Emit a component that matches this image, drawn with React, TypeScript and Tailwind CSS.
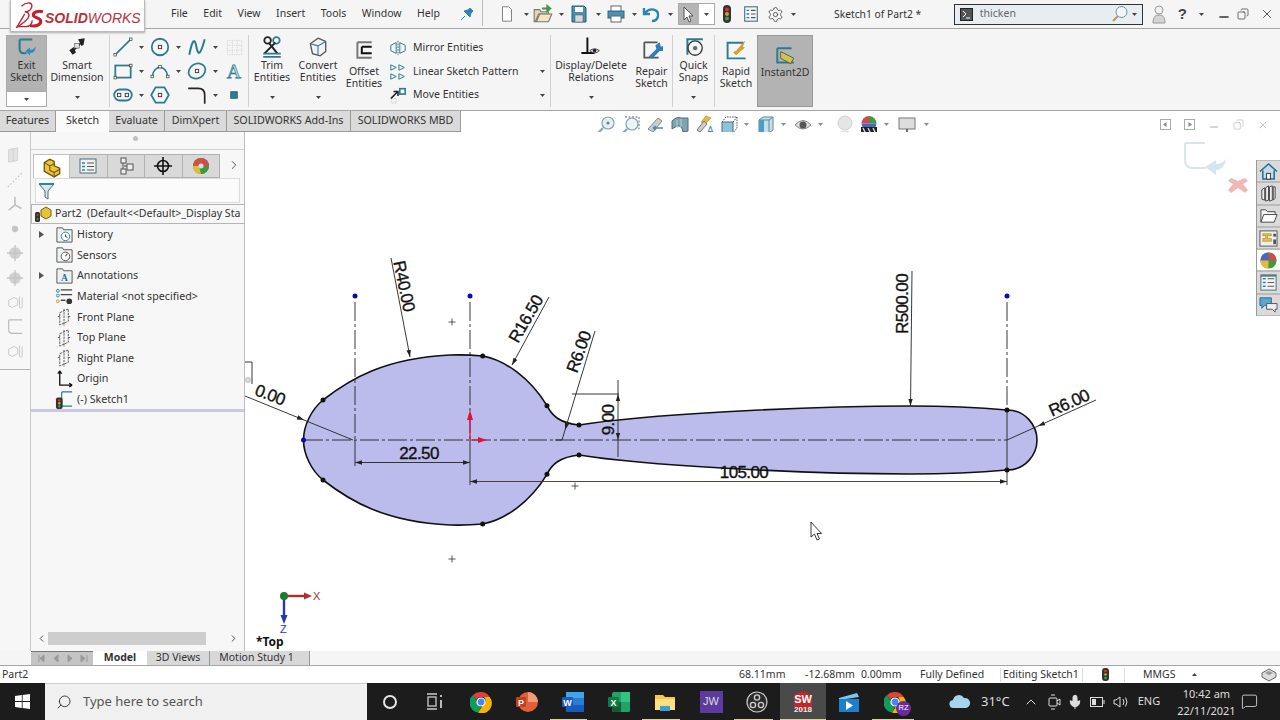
import React from "react";
import { Search, Settings, Mic, ChevronUp, MessageSquare, X, Minus, Copy, ChevronRight, ChevronLeft } from "lucide-react";

const teal = "#2b7c8e";

function Chev({ className = "" }: { className?: string }) {
  return (
    <svg width="5" height="3" viewBox="0 0 5 3" className={`shrink-0 ${className}`}>
      <path d="M0 0h5L2.500 3z" fill="#444" />
    </svg>
  );
}

function Ico({ s = 20, children, className = "" }: { s?: number; children: React.ReactNode; className?: string }) {
  return (
    <svg width={s} height={s} viewBox="0 0 20 20" fill="none" className={`shrink-0 ${className}`}>
      {children}
    </svg>
  );
}

const Sq = ({ x, y }: { x: number; y: number }) => <rect x={x - 1.2} y={y - 1.2} width="2.4" height="2.4" fill="#fff" stroke="#333" strokeWidth=".6" />;

const ToolIcons: Record<string, React.ReactNode> = {
  line: <><path d="M3 17L17 3" stroke={teal} strokeWidth="1.5" /><Sq x={3} y={17} /><Sq x={17} y={3} /></>,
  circle: <><circle cx="10" cy="10" r="7.5" stroke={teal} strokeWidth="1.6" /><rect x="8.5" y="8.5" width="3" height="3" stroke="#333" strokeWidth=".8" /></>,
  spline: <path d="M3 17C6 2 8 2 9.5 10S13 18 17 3" stroke={teal} strokeWidth="1.8" />,
  grid: <path d="M4 4h13v13H4zM4 8.5h13M4 13h13M8.5 4v13M13 4v13" stroke="#ccc" strokeWidth=".7" strokeDasharray="1 1" />,
  rect: <><rect x="3" y="5" width="14" height="11" stroke={teal} strokeWidth="1.6" /><Sq x={3} y={16} /><Sq x={17} y={5} /></>,
  arc: <><path d="M3 15C4 4 16 4 17 15" stroke={teal} strokeWidth="1.5" /><Sq x={3} y={15} /><Sq x={17} y={15} /><Sq x={10} y={6} /></>,
  ellipse: <><ellipse cx="10" cy="10" rx="8" ry="6.5" transform="rotate(-30 10 10)" stroke={teal} strokeWidth="1.6" /><rect x="8.5" y="8.5" width="3" height="3" stroke="#333" strokeWidth=".8" /></>,
  text: <text x="10" y="16.5" textAnchor="middle" fontSize="18" fontFamily="Liberation Serif, serif" fill="#e4eef0" stroke={teal} strokeWidth=".7">A</text>,
  slot: <><rect x="2" y="5" width="16" height="10" rx="5" stroke={teal} strokeWidth="1.6" /><rect x="5" y="8.5" width="3" height="3" stroke="#333" strokeWidth=".8" /><rect x="12" y="8.5" width="3" height="3" stroke="#333" strokeWidth=".8" /></>,
  polygon: <><path d="M6 3h8l4 7-4 7H6l-4-7z" stroke={teal} strokeWidth="1.6" /><rect x="8.5" y="8.5" width="3" height="3" stroke="#333" strokeWidth=".8" /></>,
  fillet: <path d="M2 4h9q6 0 6 6v8" stroke="#222" strokeWidth="1.5" />,
  point: <rect x="7" y="7" width="6" height="6" fill={teal} stroke="#1d5d6b" strokeWidth=".7" />,
  mirror: <><path d="M10 2v16" stroke="#555" strokeDasharray="2 1" /><path d="M8 4L2 7v6l6 3zM12 4l6 3v6l-6 3z" stroke={teal} strokeWidth="1.1" /></>,
  linear: <path d="M2 2l6 3-6 3zM11 2l6 3-6 3zM2 12l6 3-6 3zM11 12l6 3-6 3z" stroke={teal} strokeWidth="1.1" />,
  move: <><path d="M2 14L9 7M5 6h5v5" stroke="#222" strokeWidth="1.7" /><rect x="12" y="3" width="6" height="6" fill="#fff" stroke={teal} strokeWidth="1.8" /><rect x="3" y="14" width="5" height="5" stroke="#bbb" strokeDasharray="1 1" /></>,
};

function Tool({ name, chev = true }: { name: string; chev?: boolean }) {
  return (
    <div className="flex items-center gap-[5px] h-[24px]">
      <Ico s={22}>{ToolIcons[name]}</Ico>
      {chev && <Chev />}
    </div>
  );
}

// one text node, so the two lines can sit 12px apart like the real ribbon
function Label({ lines }: { lines: string[] }) {
  return (
    <div className="text-center text-[10.5px] leading-[12px] text-[#333] whitespace-pre">{lines.join("\n")}</div>
  );
}

function Sep() {
  return <div className="w-px h-full bg-[#d0d0d0] shrink-0" />;
}

function BigBtn({ w, lines, icon, top, chev = false }: { w: string; lines: string[]; icon: React.ReactNode; top: string; chev?: boolean }) {
  return (
    <div className={`${w} h-full flex flex-col items-center shrink-0`}>
      <div className={`${top} flex items-center justify-center`}>{icon}</div>
      <Label lines={lines} />
      {chev && <Chev className="mt-auto mb-[8px]" />}
    </div>
  );
}

function TitleBar() {
  return (
    <div className="h-[29px] bg-[#f5f5f5] border-b border-[#a6a6a6] flex items-start shrink-0 relative z-20">
      <div className="ml-[10px] w-[135px] h-[32px] bg-white border border-[#bbb] border-t-0 shadow-[0_1px_2px_#aaa] flex items-center pl-[3px] shrink-0">
        <svg width="30" height="30" viewBox="0 0 28 28" fill="none" className="shrink-0">
          <path d="M7 5c5-5 12-4 9 2-1 2-4 3-6 3 4 0 5 3 3 6-3 4-8 7-11 9" stroke="#c3202e" strokeWidth="1.300" />
          <path d="M10 12L3 24h8c4 0 6-3 6-6" stroke="#c3202e" strokeWidth="1.200" />
          <path d="M27 10c-4-1-9 0-9 3s7 2 7 6-6 5-10 4" stroke="#c3202e" strokeWidth="2.800" />
        </svg>
        <span className="font-['Liberation_Sans'] italic text-[14px] text-[#b8323c] ml-[1px] mt-[5px]">
          <b>SOLID</b>WORKS
        </span>
      </div>
      <div className="flex gap-[15.5px] ml-[26px] w-[265px] h-[28px] items-center text-[10.5px] text-[#333] shrink-0">
        {["File", "Edit", "View", "Insert", "Tools", "Window", "Help"].map((m) => (
          <span key={m}>{m}</span>
        ))}
      </div>
      <div className="ml-[24px] h-[28px] flex items-center">
        <svg width="14" height="14" viewBox="0 0 14 14"><path d="M1 13l4-4M4 4l6 6 1-4 2-2-3-3-2 2z" fill="#2a86b0" stroke="#2a86b0" /></svg>
      </div>
      <div className="w-px h-[26px] bg-[#bbb] ml-[8px]" />
      <div className="h-[28px] flex items-center ml-[15px]">
        <Ico s={18}><path d="M5 2h7l3 3v13H5z" fill="#fff" stroke="#777" /></Ico>
        <Chev className="ml-[8px]" />
        <Ico s={22} className="ml-[3px]"><path d="M2 6h5l1 2h7v2H6L3 17l-1 0z" fill="#e8d9a8" stroke="#777" /><path d="M4 17l3-7h11l-3 7z" fill="#f2e6bd" stroke="#777" /><path d="M9 4h4V1l5 4-5 4V6H9z" fill="#3f9c3f" /></Ico>
        <Chev className="ml-[4.500px]" />
        <Ico s={20} className="ml-[5.500px]"><path d="M3 2h12l2 2v14H3z" fill="#4d8fb0" stroke="#1e5e7e" /><rect x="6" y="3" width="8" height="5" fill="#fff" /><rect x="6" y="11" width="8" height="7" fill="#d8d8d8" stroke="#555" strokeWidth=".5" /></Ico>
        <Chev className="ml-[6.500px]" />
        <Ico s={20} className="ml-[5.500px]"><rect x="5" y="2" width="10" height="6" fill="#fff" stroke="#666" /><rect x="2" y="7" width="16" height="7" fill="#4b8fb3" stroke="#2a6685" /><rect x="5" y="12" width="10" height="6" fill="#fff" stroke="#666" /></Ico>
        <Chev className="ml-[5.500px]" />
        <Ico s={20} className="ml-[5.500px]"><path d="M2 4v6h6M3 9c5-6 14-4 13 3-.5 3-3 5-6 5" stroke="#2a86b0" strokeWidth="2.400" /></Ico>
        <Chev className="ml-[5.500px]" />
      </div>
      <div className="ml-[5.500px] mt-[3px] h-[22px] flex border border-[#aaa] shrink-0">
        <div className="w-[20px] bg-[#b5b5b5] flex items-center justify-center">
          <svg width="12" height="17" viewBox="0 0 12 17"><path d="M1 1v13l3-3 2 5 2-1-2-5h4z" fill="#fff" stroke="#555" /></svg>
        </div>
        <div className="w-[15px] bg-white flex items-center justify-center"><Chev /></div>
      </div>
      <div className="h-[28px] flex items-center ml-[7px]">
        <svg width="10" height="18" viewBox="0 0 10 18"><rect x="1" y="0" width="8" height="18" rx="4" fill="#333" /><circle cx="5" cy="4.500" r="2" fill="#d83030" /><circle cx="5" cy="9" r="2" fill="#c9a020" /><circle cx="5" cy="13.500" r="2" fill="#3aa040" /></svg>
        <Ico s={18} className="ml-[10px]"><rect x="3" y="2" width="14" height="16" fill="#f4f4f4" stroke="#4b6d7c" strokeWidth="1.200" /><path d="M5 6h3M5 10h3M5 14h3" stroke="#2a86b0" strokeWidth="1.600" /><path d="M10 6h5M10 10h5M10 14h5" stroke="#555" strokeWidth="1.200" /></Ico>
        <Settings size={17} strokeWidth={1.200} color="#444" className="ml-[6.500px]" />
        <Chev className="ml-[7px]" />
      </div>
      <span className="absolute left-[834px] top-[7px] text-[10.3px] leading-[15px] text-[#333] whitespace-nowrap">Sketch1 of Part2 *</span>
      <div className="ml-auto h-[28px] flex items-center">
        <div className="w-[189px] h-[21px] border border-[#333] bg-[#e8edf2] flex items-center">
          <div className="w-[13px] h-[13px] ml-[5px] bg-[#555] border border-[#222] flex items-center justify-center">
            <svg width="9" height="9" viewBox="0 0 9 9" fill="none"><path d="M1 1l3 3-3 3M4 8h4" stroke="#fff" /></svg>
          </div>
          <span className="ml-[7px] text-[10.5px] text-[#666]">thicken</span>
          <svg width="18" height="18" viewBox="0 0 18 18" fill="none" className="ml-auto"><circle cx="10.500" cy="7" r="5.500" stroke="#6b97ab" fill="#f2f6f8" /><path d="M7 11l-5 5" stroke="#b79b5e" strokeWidth="2" /></svg>
          <Chev className="ml-[3px] mr-[5px]" />
        </div>
        <svg width="14" height="20" viewBox="0 0 14 20" className="ml-[9px]"><circle cx="7" cy="6" r="4" fill="#f1f1f1" stroke="#999" /><path d="M1 19c0-7 3-8 6-8s6 1 6 8z" fill="#d4d4d4" stroke="#999" /></svg>
        <span className="ml-[12px] font-['Liberation_Sans'] font-bold text-[15px] text-[#444]">?</span>
        <Chev className="ml-[12px]" />
        <Minus size={14} strokeWidth={2.400} color="#333" className="ml-[13px] mt-[5px]" />
        <Copy size={12} strokeWidth={1.400} color="#333" className="ml-[6px] -scale-x-100" />
        <X size={14} strokeWidth={1.400} color="#333" className="ml-[11px] mr-[6px]" />
      </div>
    </div>
  );
}

function Ribbon() {
  return (
    <div className="h-[82px] bg-[#f5f5f5] border-b border-[#a6a6a6] pt-[6px] pb-[3px] pl-[6px] flex shrink-0">
      <div className="w-[41px] h-full flex flex-col shrink-0 border border-[#aaa]">
        <div className="h-[55px] bg-[#b3b3b3] flex flex-col items-center">
          <Ico s={23}>
            <path d="M4 3h11M4 3v8q0 4 4 4h2" stroke={teal} strokeWidth="1.800" />
            <path d="M9 13l4-3v2c3 0 4-1 5-3 0 4-2 6-5 6v2z" fill="#2b8fc0" />
          </Ico>
          <Label lines={["Exit", "Sketch"]} />
        </div>
        <div className="flex-1 bg-white flex items-center justify-center border-t border-[#aaa]"><Chev /></div>
      </div>
      <div className="ml-[3px]">
        <BigBtn w="w-[54px]" lines={["Smart", "Dimension"]} top="h-[24px]" chev icon={
          <Ico s={22}><path d="M6 14L15 5" stroke="#222" strokeWidth="1.400" /><path d="M3 13l4-3 2 5-3 2zM11 3l6-1-1 6-2 1z" fill="#222" /><rect x="8" y="7" width="4" height="4" fill="#e5e5e5" stroke="#333" strokeWidth=".5" /></Ico>
        } />
      </div>
      <div className="ml-[5px]"><Sep /></div>
      <div className="w-[138px] pl-[2px] grid grid-cols-[37px_37px_37px_22px] shrink-0">
        <Tool name="line" /><Tool name="circle" /><Tool name="spline" /><Tool name="grid" chev={false} />
        <Tool name="rect" /><Tool name="arc" /><Tool name="ellipse" /><Tool name="text" chev={false} />
        <Tool name="slot" /><Tool name="polygon" chev={false} /><Tool name="fillet" /><Tool name="point" chev={false} />
      </div>
      <Sep />
      <BigBtn w="w-[46px]" lines={["Trim", "Entities"]} top="h-[24px]" chev icon={
        <Ico s={22}><circle cx="6" cy="4" r="3" stroke="#222" strokeWidth="1.600" /><circle cx="14" cy="4" r="3" stroke={teal} strokeWidth="1.600" /><path d="M7 6l8 10M13 6L3 16" stroke="#222" strokeWidth="1.800" /><path d="M2 16h16M2 19h16" stroke={teal} strokeWidth="1.500" /></Ico>
      } />
      <BigBtn w="w-[46px]" lines={["Convert", "Entities"]} top="h-[24px]" chev icon={
        <Ico s={22}><path d="M10 2l7 3v9l-5 4-7-2-2-9z" fill="#f2f2f2" stroke="#555" strokeWidth="1.200" /><path d="M3 7l7 2 7-4M10 9v9" stroke={teal} /></Ico>
      } />
      <BigBtn w="w-[46px]" lines={["Offset", "Entities"]} top="h-[30px]" icon={
        <Ico s={22}><path d="M4 3h13M4 3v14h13" stroke="#777" strokeWidth="1.800" /><path d="M8 7h9M8 7v6h9" stroke="#111" strokeWidth="1.800" /></Ico>
      } />
      <div className="w-[163px] shrink-0 flex flex-col pt-[1px] pl-[2px] pr-[5px] text-[10.5px] text-[#333]">
        {[
          { ic: "mirror", t: "Mirror Entities", c: false },
          { ic: "linear", t: "Linear Sketch Pattern", c: true },
          { ic: "move", t: "Move Entities", c: true },
        ].map((r) => (
          <div key={r.t} className="h-[24px] flex items-center">
            <Ico s={18}>{ToolIcons[r.ic]}</Ico>
            <span className="ml-[6px]">{r.t}</span>
            {r.c && <Chev className="ml-auto" />}
          </div>
        ))}
      </div>
      <Sep />
      <BigBtn w="w-[80px]" lines={["Display/Delete", "Relations"]} top="h-[24px]" chev icon={
        <Ico s={24}><path d="M7 2v13M2 15h11" stroke="#111" strokeWidth="1.600" /><path d="M9 13q4-3 8 0-4 4-8 0z" fill="#ddd" stroke="#333" strokeWidth=".7" /><circle cx="13" cy="13" r="1.500" fill="#222" /></Ico>
      } />
      <BigBtn w="w-[41px]" lines={["Repair", "Sketch"]} top="h-[30px]" icon={
        <Ico s={22}><path d="M3 3h12M3 3v14h13" stroke="#555" strokeWidth="1.600" /><path d="M17 3l-4 3 1 3-7 7 3 2 7-7 3 0 1-5-3 1z" fill="#2f7fb5" /></Ico>
      } />
      <Sep />
      <BigBtn w="w-[41px]" lines={["Quick", "Snaps"]} top="h-[24px]" chev icon={
        <Ico s={22}><path d="M3 3h15M4 3v14" stroke={teal} strokeWidth="1.800" /><circle cx="11" cy="11" r="6.500" stroke="#333" strokeWidth="1.200" /><circle cx="11" cy="11" r="2" fill="#666" /></Ico>
      } />
      <Sep />
      <BigBtn w="w-[42px]" lines={["Rapid", "Sketch"]} top="h-[30px]" icon={
        <Ico s={24}><path d="M16 4H3v13h15" stroke={teal} strokeWidth="1.600" /><path d="M8 12l4-2-1 0 6-7-2 5 2 0-7 6z" fill="#e6a12a" stroke="#c07c14" strokeWidth=".5" /></Ico>
      } />
      <div className="w-[56px] h-full bg-[#b3b3b3] border border-[#999] flex flex-col items-center shrink-0 pt-[9px]">
        <Ico s={22}><path d="M3 3h13M3 3v13h15" stroke={teal} strokeWidth="1.800" /><path d="M6 6l12 6-3 5-9-5z" fill="#d4c34a" stroke="#444" strokeWidth=".7" /></Ico>
        <div className="text-[10.5px] leading-[12px] text-[#333] -mt-[1px]">Instant2D</div>
      </div>
    </div>
  );
}

function HudIcon({ kind, className = "" }: { kind: string; className?: string }) {
  const g = "#7ba5b5";
  const map: Record<string, React.ReactNode> = {
    fit: <><circle cx="12" cy="8" r="6" fill="#e8eef1" stroke={g} strokeWidth="1.200" /><circle cx="12" cy="8" r="1.500" fill="#777" /><path d="M7 13l-5 5" stroke="#8fa9b4" strokeWidth="2.400" /></>,
    area: <><circle cx="11" cy="9" r="6" fill="#eef3f5" stroke={g} strokeWidth="1.200" /><path d="M4 2h14v12" stroke="#666" strokeDasharray="2 1.500" /><path d="M6 14l-4 4" stroke="#8fa9b4" strokeWidth="2.400" /></>,
    prev: <><path d="M3 14L13 3l4 3-9 11z" fill="#ccc" stroke="#888" /><path d="M8 13h10M8 13l3-2M8 13l3 2" stroke="#4a8aa8" strokeWidth="1.400" /></>,
    section: <><path d="M2 6q5-5 9-3l7 0v13l-5 1q-1-7-6-6l-5 3z" fill="#7fa3b1" stroke="#4f6f7c" /><path d="M7 5v8M11 4v8" stroke="#b8d0da" /></>,
    dyn: <><path d="M12 1l5 2-6 6-4-2z" fill="#e8b83a" stroke="#a07b1a" strokeWidth=".5" /><path d="M3 15L10 6l3 3-7 8z" fill="#ccc" stroke="#777" /><text x="13" y="19" fontSize="10" fill="#4a8aa8" fontFamily="Liberation Sans, sans-serif">A</text></>,
    orient: <><path d="M3 7h11v11H3z" fill="#8fc3dc" stroke="#4b6d7c" /><path d="M3 7l4-5h11v11l-4 5M14 7l4-5" stroke="#555" strokeDasharray="1.500 1" /></>,
    display: <><path d="M3 5l4-3h10v13l-4 3H3z" fill="#c5e0ea" stroke="#5d8898" /><path d="M3 5h10v13M13 5l4-3" stroke="#5d8898" /><rect x="3" y="5" width="5" height="13" fill="#4a9fc2" /></>,
    eye: <><path d="M2 10q8-9 16 0-8 8-16 0z" fill="#e0e0e0" stroke="#888" /><circle cx="10" cy="10" r="3.500" fill="#555" /></>,
    scene: <><circle cx="10" cy="8" r="7" fill="#e5e5e5" stroke="#d0d0d0" /><path d="M6 17h8" stroke="#ddd" strokeWidth="2" /></>,
    appear: <><path d="M10 1a7.500 7.500 0 0 1 7.500 7.500H10z" fill="#3d9a3d" /><path d="M10 1a7.500 7.500 0 0 0-7.500 7.500H10z" fill="#d14b4b" /><path d="M2.500 8.500a7.500 7.500 0 0 0 15 0z" fill="#4a66c4" /><rect x="2" y="12" width="16" height="6" fill="#222" /><path d="M4 13l2 4M9 13l2 4M14 13l2 4" stroke="#ddd" strokeWidth="1.400" /></>,
    monitor: <><rect x="2" y="3" width="16" height="11" fill="#ddd" stroke="#777" /><path d="M10 14v3M6 18h8" stroke="#444" strokeWidth="1.500" /></>,
  };
  return <Ico s={20} className={className}>{map[kind]}</Ico>;
}

const TABS = [
  { t: "Features", w: "w-[56px]", on: false },
  { t: "Sketch", w: "w-[53px]", on: true },
  { t: "Evaluate", w: "w-[56px]", on: false },
  { t: "DimXpert", w: "w-[62px]", on: false },
  { t: "SOLIDWORKS Add-Ins", w: "w-[124px]", on: false },
  { t: "SOLIDWORKS MBD", w: "w-[110px]", on: false },
];

function TabRow() {
  return (
    <div className="h-[21px] bg-white flex items-center shrink-0">
      <div className="flex h-full">
        {TABS.map((t) => (
          <div
            key={t.t}
            className={`${t.w} text-center text-[10.7px] leading-[19px] text-[#333] ${t.on ? "bg-[#fafafa]" : "bg-[#dadada] border-r border-b border-[#9a9a9a]"}`}
          >
            {t.t}
          </div>
        ))}
      </div>
      <div className="ml-[135px] flex items-center h-full pt-[6px]">
        <HudIcon kind="fit" />
        <HudIcon kind="area" className="ml-[4.500px]" />
        <HudIcon kind="prev" className="ml-[4.500px]" />
        <HudIcon kind="section" className="ml-[4.500px]" />
        <HudIcon kind="dyn" className="ml-[4.500px]" />
        <HudIcon kind="orient" className="ml-[4.500px]" />
        <Chev className="ml-[5px] opacity-60" />
        <HudIcon kind="display" className="ml-[7.500px]" />
        <Chev className="ml-[4.500px] opacity-60" />
        <HudIcon kind="eye" className="ml-[7.500px]" />
        <Chev className="ml-[4.500px] opacity-60" />
        <HudIcon kind="scene" className="ml-[12.500px]" />
        <HudIcon kind="appear" className="ml-[4px]" />
        <Chev className="ml-[4.500px] opacity-60" />
        <HudIcon kind="monitor" className="ml-[8.500px]" />
        <Chev className="ml-[6.500px] opacity-60" />
      </div>
      <div className="ml-auto mr-[11px] flex items-center gap-[13px] pt-[6px] text-[#aaa]">
        <svg width="11" height="11" viewBox="0 0 11 11" fill="none"><rect x=".5" y=".5" width="10" height="10" stroke="#aaa" /><path d="M6.500 3v5L3 5.500z" fill="#888" /></svg>
        <svg width="11" height="11" viewBox="0 0 11 11" fill="none"><rect x=".5" y=".5" width="10" height="10" stroke="#aaa" /><path d="M4.500 3v5L8 5.500z" fill="#888" /></svg>
        <Minus size={12} strokeWidth={2} className="mt-[5px]" />
        <Copy size={11} strokeWidth={1.200} className="-scale-x-100" />
        <X size={12} strokeWidth={1.200} />
      </div>
    </div>
  );
}

function Ghost({ children }: { children: React.ReactNode }) {
  return <Ico s={18} className="opacity-30">{children}</Ico>;
}

function LeftStrip() {
  const clip = <><path d="M3 8l6-3 4 2v6l-6 3-4-2z" stroke="#555" /><path d="M15 4v12a2 2 0 0 0 3 0V5" stroke="#555" /></>;
  return (
    <div className="w-[31px] bg-[#f7f7f7] border-r border-[#c9c9c9] shrink-0 flex flex-col">
      <div className="h-[238px] border-b border-[#b5b5b5] flex flex-col items-center pr-[1px] pt-[14px] gap-[6.500px]">
        <Ghost><path d="M3 4l10-2v14l-10 2zM8 3v14" fill="#bbb" stroke="#777" /></Ghost>
        <Ghost><path d="M2 18L18 2" stroke="#555" strokeDasharray="2 2" strokeWidth="1.300" /></Ghost>
        <Ghost><path d="M10 2v9L3 17M10 11l7 4" stroke="#333" strokeWidth="1.600" /></Ghost>
        <Ghost><circle cx="10" cy="10" r="3.500" fill="#555" /></Ghost>
        <Ghost><circle cx="10" cy="10" r="6.500" fill="#777" /><path d="M10 1v18M1 10h18" stroke="#555" strokeWidth="1.500" /></Ghost>
        <Ghost><circle cx="10" cy="10" r="6.500" fill="#777" /><path d="M10 1v18M1 10h18" stroke="#555" strokeWidth="1.500" /></Ghost>
        <Ghost>{clip}</Ghost>
        <Ghost><path d="M3 2v11q0 4 4 4h11M3 2h15" stroke="#333" strokeWidth="1.300" /></Ghost>
        <Ghost>{clip}</Ghost>
      </div>
    </div>
  );
}

const TREE = [
  { t: "History", arrow: true, ic: "folderClock" },
  { t: "Sensors", arrow: false, ic: "folderGauge" },
  { t: "Annotations", arrow: true, ic: "folderA" },
  { t: "Material <not specified>", arrow: false, ic: "material" },
  { t: "Front Plane", arrow: false, ic: "plane" },
  { t: "Top Plane", arrow: false, ic: "plane" },
  { t: "Right Plane", arrow: false, ic: "plane" },
  { t: "Origin", arrow: false, ic: "origin" },
  { t: "(-) Sketch1", arrow: false, ic: "sketch" },
];

function TreeIcon({ kind }: { kind: string }) {
  const folder = <path d="M2 5V3h6l1 2h9v13H2z" fill="#eef1f2" stroke="#555" />;
  const map: Record<string, React.ReactNode> = {
    folderClock: <>{folder}<circle cx="11" cy="12" r="4.500" fill="#fff" stroke="#2a86b0" /><path d="M11 10v2l2 1" stroke="#333" /></>,
    folderGauge: <>{folder}<circle cx="11" cy="12" r="4.500" fill="#fff" stroke="#555" /><path d="M11 12l2-3" stroke="#c33" strokeWidth="1.200" /></>,
    folderA: <>{folder}<text x="10" y="16" textAnchor="middle" fontSize="10" fontWeight="700" fontFamily="Liberation Serif, serif" fill="#2a6f9a">A</text></>,
    material: <><circle cx="3" cy="4" r="1.500" stroke="#2a86b0" /><circle cx="3" cy="9" r="1.500" stroke="#2a86b0" /><circle cx="3" cy="15" r="1.500" stroke="#c9a020" /><path d="M6 3h12M6 8h12" stroke="#444" strokeWidth="1.500" /><path d="M6 14h5" stroke="#444" strokeWidth="1.500" /><circle cx="15" cy="15" r="3" fill="#333" /></>,
    plane: <path d="M5 6l9-4v13l-9 4zM9.500 2v18M3 10h2M14 10h2" stroke="#555" strokeDasharray="2.500 1" />,
    origin: <path d="M5 2v15h13M5 2L3 5M5 2l2 3M18 17l-3-2M18 17l-3 2" stroke="#111" strokeWidth="1.400" />,
    sketch: <><path d="M7 2h11M7 2v15h11" stroke={teal} strokeWidth="1.200" /><rect x="1" y="8" width="7" height="12" rx="2" fill="#333" /><circle cx="4.500" cy="11" r="1.300" fill="#d33" /><circle cx="4.500" cy="14" r="1.300" fill="#ca2" /><circle cx="4.500" cy="17" r="1.300" fill="#3a4" /></>,
  };
  return <Ico s={19}>{map[kind]}</Ico>;
}

function FeatureTree() {
  const cube = (
    <Ico s={22}>
      <path d="M3 6l5-3 4 2v4l5 2v5l-5 3-9-5z" fill="#ecc53a" stroke="#6e5610" strokeWidth="1.200" />
      <path d="M3 6l5 3 4-2M8 9v4l4 2v4M12 15l5-3" stroke="#6e5610" />
    </Ico>
  );
  return (
    <div className="w-[214px] bg-[#f7f7f7] border-r border-[#bdbdbd] shrink-0 flex flex-col relative">
      <div className="h-[18px] border-b border-[#d4d4d4] flex justify-center items-center shrink-0 pr-[4px]">
        <div className="w-[5px] h-[5px] rounded-full bg-[#c0c0c0] mb-[4px]" />
      </div>
      <div className="h-[28px] flex pl-[2px] pt-[4px] shrink-0">
        <div className="w-[37px] bg-white border-t border-x border-[#c0c0c0] flex justify-center items-center">{cube}</div>
        {[
          <Ico s={20} key="1"><rect x="2" y="3" width="16" height="14" fill="#f2f2f2" stroke="#4b6d7c" /><path d="M4 7h3M4 10.500h3M4 14h3" stroke="#2a86b0" strokeWidth="1.500" /><path d="M9 7h7M9 10.500h7M9 14h7" stroke="#555" /></Ico>,
          <Ico s={20} key="2"><rect x="5" y="2" width="5" height="5" fill="#eee" stroke="#555" /><rect x="5" y="13" width="5" height="5" fill="#eee" stroke="#555" /><rect x="11" y="8" width="6" height="6" fill="#eee" stroke="#555" /><path d="M7 7v6M8 10h3" stroke="#555" /></Ico>,
          <Ico s={20} key="3"><circle cx="10" cy="10" r="5.500" stroke="#111" strokeWidth="1.600" /><path d="M10 1v18M1 10h18" stroke="#111" strokeWidth="1.600" /></Ico>,
          <Ico s={20} key="4"><circle cx="10" cy="10" r="8" fill="#3d9a3d" /><path d="M10 2a8 8 0 0 1 8 8h-8z" fill="#d14b4b" /><path d="M2 10a8 8 0 0 1 8-8v8z" fill="#c9563d" /><path d="M2 10a8 8 0 0 0 8 8l-2-8z" fill="#e8b83a" /><path d="M10 10h8a8 8 0 0 1-8 8z" fill="#3d9a3d" /><circle cx="10" cy="10" r="2.500" fill="#ddd" /></Ico>,
        ].map((ic, i) => (
          <div key={i} className="w-[37.500px] bg-[#d9d9d9] border border-[#b0b0b0] border-l-0 flex justify-center items-center">{ic}</div>
        ))}
        <ChevronRight size={14} color="#444" strokeWidth={1.500} className="ml-[7px] mt-[4px]" />
      </div>
      <div className="mx-[4px] h-[25px] bg-[#fbfbfb] border border-[#dcdcdc] flex items-center shrink-0 pl-[2px]">
        <svg width="17" height="18" viewBox="0 0 17 18"><path d="M1 2h15l-6 7v8l-3-2V9z" fill="#d8e8ee" stroke="#4b6d7c" /><path d="M1 2h15" stroke="#2a86b0" strokeWidth="2" /></svg>
      </div>
      <div className="h-[20px] border border-[#b5b5b5] border-r-0 flex items-center shrink-0 mt-[1px] whitespace-nowrap text-[10.6px] text-[#333]">
        <svg width="20" height="18" viewBox="0 0 20 18" className="shrink-0 ml-[1px]"><path d="M8 5l5-3 5 3v6l-5 3-5-3z" fill="#e6c23a" stroke="#7a5f10" /><rect x="2" y="7" width="5" height="10" rx="1.500" fill="#333" /><circle cx="4.500" cy="10" r="1" fill="#d33" /><circle cx="4.500" cy="14" r="1" fill="#3a4" /></svg>
        <span className="ml-[2px]">Part2&nbsp; (Default&lt;&lt;Default&gt;_Display Sta</span>
      </div>
      <div className="text-[10.7px] text-[#333]">
        {TREE.map((r) => (
          <div key={r.t} className="h-[20.600px] flex items-center">
            <div className="w-[22px] pl-[8px] flex shrink-0">
              {r.arrow && <svg width="5" height="7" viewBox="0 0 5 7"><path d="M0 0l5 3.500L0 7z" fill="#555" /></svg>}
            </div>
            <div className="ml-[2px]"><TreeIcon kind={r.ic} /></div>
            <span className="ml-[3px] whitespace-nowrap">{r.t}</span>
          </div>
        ))}
      </div>
      <div className="h-[3px] bg-[#c9c9e0]" />
      <div className="mt-auto h-[16px] mb-[5px] flex items-center px-[5px]">
        <ChevronLeft size={11} color="#444" strokeWidth={2} />
        <div className="ml-[1px] w-[158px] h-[13px] bg-[#cdcdcd]" />
        <ChevronRight size={11} color="#444" strokeWidth={2} className="ml-auto" />
      </div>
    </div>
  );
}

const SPOON =
  "M303.500 440C303.500 425 312 409 323 400C350 379 385 358 450 355C462 354.600 472 355 482.700 356C505 360 530 378 547 405.700C552 416 560 423 579 425C640 415 800 406 910 406C950 406 985 408 1007 410C1025 410 1037 425 1037 440C1037 455 1025 470 1007 470C985 472 950 474 910 474C800 474 640 465 579 455C560 457 552 464 547 474.300C530 502 505 520 482.700 524C472 525 462 525.400 450 525C385 522 350 501 323 480C312 471 303.500 455 303.500 440Z";

const DOTS = [[323, 400], [482.7, 356], [547, 405.7], [579, 425], [1007, 410], [1007, 470], [579, 455], [547, 474.3], [482.7, 524], [323, 480]];

function Dim({ x, y, r = 0, t }: { x: number; y: number; r?: number; t: string }) {
  return (
    <text
      x={x}
      y={y}
      textAnchor="middle"
      dominantBaseline="central"
      transform={`rotate(${r} ${x} ${y})`}
      fontSize="17"
      fontFamily="Liberation Sans, sans-serif"
      letterSpacing="-0.6"
      fill="#111"
      stroke="#111"
      strokeWidth=".35"
    >
      {t}
    </text>
  );
}

function Arrow({ x, y, r, c = "#222", l = 7 }: { x: number; y: number; r: number; c?: string; l?: number }) {
  return <path d={`M${x} ${y}l${-l} -2.2v4.400z`} fill={c} transform={`rotate(${r} ${x} ${y})`} />;
}

function Plus({ x, y }: { x: number; y: number }) {
  return <path d={`M${x - 3.5} ${y}h7M${x} ${y - 3.5}v7`} stroke="#444" strokeWidth=".9" />;
}

function Canvas() {
  return (
    <svg viewBox="245 132 1035 519" className="flex-1 h-full block bg-white">
      <path d={SPOON} fill="#bcbcec" stroke="#111" strokeWidth="1.600" />
      {/* center and construction lines */}
      <g stroke="#222" strokeWidth=".9" fill="none">
        <path d="M304 440H1007" strokeDasharray="19 3 3 3" />
        <path d="M355 302V440" strokeDasharray="19 3 3 3" />
        <path d="M470 302V440" strokeDasharray="19 3 3 3" />
        <path d="M1007 302V410" strokeDasharray="19 3 3 3" />
        <path d="M355 440V466M470 440V485M1007 410V485" />
        <path d="M355 462.500H470" />
        <path d="M470 481.500H1007" stroke="#3b3320" />
        <path d="M391 258L410 357" />
        <path d="M549 297L512 365" />
        <path d="M595 331L562 440H555" />
        <path d="M245 396L353 440M245 362H252V384" />
        <path d="M912 271L910.500 406" />
        <path d="M1007 440L1096 400" />
        <path d="M572 394H619M618 380V457" />
      </g>
      <Arrow x={410} y={357} r={79} />
      <Arrow x={512} y={365} r={119} />
      <Arrow x={565} y={430} r={107} />
      <Arrow x={304} y={420} r={22} />
      <Arrow x={910.5} y={406} r={90} />
      <Arrow x={1038} y={426} r={156} />
      <Arrow x={355} y={462.5} r={180} />
      <Arrow x={470} y={462.5} r={0} />
      <Arrow x={470} y={481.5} r={180} />
      <Arrow x={1007} y={481.5} r={0} />
      <Arrow x={618} y={394} r={-90} />
      <Arrow x={618} y={440} r={90} />
      <Dim x={404} y={286} r={78} t="R40.00" />
      <Dim x={526} y={319} r={-60} t="R16.50" />
      <Dim x={579} y={352} r={-70} t="R6.00" />
      <Dim x={270} y={395} r={21} t="0.00" />
      <Dim x={419} y={453} t="22.50" />
      <Dim x={744} y={472} t="105.00" />
      <Dim x={902} y={304} r={-90} t="R500.00" />
      <Dim x={608} y={420} r={-90} t="9.00" />
      <Dim x={1069} y={403} r={-24} t="R6.00" />
      {DOTS.map(([x, y]) => (
        <circle key={`${x}-${y}`} cx={x} cy={y} r="2.500" fill="#111" />
      ))}
      {[[355, 296], [470, 296], [1007, 296], [303.5, 440]].map(([x, y]) => (
        <circle key={`${x}-${y}`} cx={x} cy={y} r="2.500" fill="#0a0ab0" />
      ))}
      <Plus x={452} y={322} />
      <Plus x={452} y={559} />
      <Plus x={575} y={486} />
      {/* sketch origin */}
      <path d="M470 440V418M470 440H480" stroke="#e0103c" strokeWidth="1.200" />
      <path d="M470 410l-3 10h6zM487 440l-9-3v6z" fill="#e0103c" />
      {/* cursor */}
      <path d="M811 522v15l3.500-3 2.500 6 2.500-1-2.500-5.500h4.500z" fill="#fff" stroke="#222" strokeWidth=".9" />
      {/* triad */}
      <path d="M284 596H305" stroke="#b02a30" strokeWidth="2.400" />
      <path d="M312 596l-8-3.500v7z" fill="#b02a30" />
      <path d="M284 596V616" stroke="#2a35b5" strokeWidth="2.400" />
      <path d="M284 624l-3.500-9h7z" fill="#2a35b5" />
      <circle cx="284" cy="596" r="4" fill="#1f7a2c" />
      <text x="313" y="600" fontSize="11" fill="#b02a30" fontFamily="Liberation Sans, sans-serif">X</text>
      <text x="280" y="633" fontSize="11" fill="#2a35b5" fontFamily="Liberation Sans, sans-serif">Z</text>
      <text x="256" y="646" fontSize="12" fontWeight="700" fill="#111" fontFamily="Noto Sans, sans-serif">*Top</text>
      {/* confirmation corner */}
      <path d="M1185 143h20M1185 143v17q0 8 8 8h13" stroke="#dbe5e8" strokeWidth="2" fill="none" />
      <path d="M1205 167l11-7v4c5 0 7-2 10-5-1 7-5 11-10 11v5z" fill="#d3e6ee" />
      <path d="M1231 178l7 3 7-3 3 3-5 3 5 6-3 3-7-5-7 5-3-3 5-6-5-3z" fill="#f0b7b7" />
      {/* splitter */}
      <circle cx="248" cy="380" r="2.500" fill="#ddd" stroke="#aaa" strokeWidth=".7" />
    </svg>
  );
}

function TaskPane() {
  const items: React.ReactNode[] = [
    <Ico s={19} key="home"><path d="M1 10l9-8 9 8M4 9v9h12V9" fill="#bde" stroke="#2b6f88" strokeWidth="1.600" /><rect x="8" y="12" width="4" height="6" fill="#fff" stroke="#333" /></Ico>,
    <Ico s={19} key="lib"><path d="M3 6l3-2v13l-3-1zM7 4l3-2v15l-3 1zM11 3l3-1v15l-3 1zM15 3l2 0v12l-2 2z" fill="#eee" stroke="#444" /></Ico>,
    <Ico s={19} key="folder"><path d="M2 17V4h5l2 2h8v3" stroke="#444" fill="#f4f4f4" /><path d="M2 17l3-8h14l-3 8z" fill="#fff" stroke="#444" /></Ico>,
    <Ico s={19} key="view"><rect x="1" y="2" width="18" height="16" fill="#eee" stroke="#555" /><path d="M4 5h9v2H9v3h4v3H4v-3h3V7H4z" fill="#e6c23a" stroke="#87701a" strokeWidth=".5" /><rect x="15" y="5" width="3" height="3" fill="#555" /><rect x="15" y="11" width="3" height="5" fill="#555" /></Ico>,
    <Ico s={19} key="app"><circle cx="10" cy="10" r="8.500" fill="#3d9a3d" /><path d="M10 1.500A8.500 8.500 0 0 1 18.500 10H10z" fill="#d14b4b" /><path d="M1.500 10A8.500 8.500 0 0 1 10 1.500V10z" fill="#4a66c4" /><path d="M1.500 10A8.500 8.500 0 0 0 10 18.500V10z" fill="#e8b83a" /></Ico>,
    <Ico s={19} key="prop"><rect x="2" y="2" width="16" height="16" fill="#f2f2f2" stroke="#4b6d7c" /><path d="M4 6h3M4 10h3M4 14h3" stroke="#2a86b0" strokeWidth="1.600" /><path d="M9 6h7M9 10h7M9 14h7" stroke="#555" /><path d="M2 3h16" stroke="#4b6d7c" strokeWidth="1.600" /></Ico>,
    <Ico s={19} key="forum"><path d="M1 3h12v8H6l-3 3v-3H1z" fill="#5aa7cf" stroke="#2b6f88" /><path d="M8 9h11v6h-2v3l-3-3H8z" fill="#eee" stroke="#555" /></Ico>,
  ];
  return (
    <div className="absolute right-0 top-[28px] w-[24px] flex flex-col border-l border-[#999]">
      {items.map((ic, i) => (
        <div key={i} className={`h-[22.300px] flex items-center justify-center border-y border-[#bbb] ${i === 4 ? "bg-white" : "bg-[#dadada]"}`}>
          {ic}
        </div>
      ))}
    </div>
  );
}

function BottomTabs() {
  return (
    <div className="h-[15px] bg-[#f5f5f5] border-b border-[#a6a6a6] flex shrink-0 text-[10.5px] leading-[13px] text-[#333]">
      <div className="w-[31px]" />
      <div className="w-[62px] bg-[#c4c4c4] border-t border-[#777] flex items-center justify-around px-[1px]">
        {["M5 2v7M10 2L6 5.500l4 3.500z", "M9 2L5 5.500 9 9z", "M4 2l4 3.500L4 9z", "M2 2l4 3.500L2 9zM8 2v7"].map((d) => (
          <svg key={d} width="11" height="11" viewBox="0 0 11 11"><path d={d} fill="#999" stroke="#999" /></svg>
        ))}
      </div>
      <div className="w-[54px] text-center font-bold bg-white">Model</div>
      <div className="w-[63px] text-center bg-[#d8d8d8] border-r border-[#999]">3D Views</div>
      <div className="w-[100px] pr-[6px] text-center bg-[#d8d8d8] border-r border-[#999]">Motion Study 1</div>
    </div>
  );
}

function StatusBar() {
  return (
    <div className="h-[17px] bg-white flex items-center text-[10.5px] text-[#333] shrink-0">
      <span className="ml-[2px] w-[737px] shrink-0">Part2</span>
      <span className="w-[66px] shrink-0">68.11mm</span>
      <span className="w-[56px] shrink-0">-12.68mm</span>
      <span className="w-[59px] shrink-0">0.00mm</span>
      <span className="w-[76px] shrink-0">Fully Defined</span>
      <div className="w-px h-[14px] bg-[#ddd] ml-[4px]" />
      <span className="ml-[2px] w-[79px] shrink-0">Editing Sketch1</span>
      <div className="w-px h-[14px] bg-[#ddd]" />
      <svg width="7" height="13" viewBox="0 0 7 13" className="ml-[19px]"><rect width="7" height="13" rx="3" fill="#333" /><circle cx="3.500" cy="3" r="1.300" fill="#d33" /><circle cx="3.500" cy="6.500" r="1.300" fill="#ca2" /><circle cx="3.500" cy="10" r="1.300" fill="#3a4" /></svg>
      <div className="w-px h-[14px] bg-[#ddd] ml-[15px]" />
      <span className="ml-[18px]">MMGS</span>
      <svg width="5" height="3" viewBox="0 0 5 3" className="ml-[17px]"><path d="M0 3h5L2.500 0z" fill="#444" /></svg>
      <svg width="16" height="14" viewBox="0 0 16 14" fill="none" className="ml-auto mr-[3px]"><path d="M1 5l7-4 7 4v4l-7 4-7-4z" fill="#ddd" stroke="#666" /><path d="M4 5l4-2 4 2-4 2z" fill="#999" /></svg>
    </div>
  );
}

function Chrome({ size = 22 }: { size?: number }) {
  return (
    <svg width={size} height={size} viewBox="0 0 22 22">
      <path d="M11 1a10 10 0 0 1 8.700 5H11a5 5 0 0 0-4.700 3.200L3 4a10 10 0 0 1 8-3z" fill="#db4437" />
      <path d="M3 4l4 7a5 5 0 0 0 4 5l-3 5.500A10 10 0 0 1 3 4z" fill="#0f9d58" />
      <path d="M19.700 6A10 10 0 0 1 8 21.500L13 14a5 5 0 0 0 1-8z" fill="#f4b400" />
      <circle cx="11" cy="11" r="4" fill="#4285f4" stroke="#fff" strokeWidth="1.200" />
    </svg>
  );
}

const TASK_ICONS: { key: string; mark: string; node: React.ReactNode; cls?: string }[] = [
  { key: "view", mark: "", node: <svg width="18" height="17" viewBox="0 0 18 17" fill="none" stroke="#ccc" strokeWidth="1.300"><path d="M1 1h10M1 16h10" /><rect x="2" y="4" width="8" height="9" /><path d="M15 2v2M15 7v8" strokeWidth="1.800" /></svg> },
  { key: "chrome", mark: "", node: <Chrome /> },
  { key: "ppt", mark: "", node: <svg width="24" height="22" viewBox="0 0 24 22"><circle cx="13" cy="11" r="10" fill="#e0603a" /><path d="M13 1a10 10 0 0 1 10 10H13z" fill="#f29b76" /><rect x="1" y="6" width="10" height="10" rx="1" fill="#c43e1c" /><text x="6" y="14.500" textAnchor="middle" fontSize="9" fontWeight="700" fill="#fff" fontFamily="Liberation Sans, sans-serif">P</text></svg> },
  { key: "word", mark: "w-[37px]", node: <svg width="24" height="22" viewBox="0 0 24 22"><rect x="5" y="1" width="18" height="20" rx="1.500" fill="#2b7cd3" /><rect x="5" y="1" width="18" height="6" fill="#41a5ee" /><rect x="5" y="14" width="18" height="7" fill="#185abd" /><rect x="1" y="6" width="11" height="10" rx="1" fill="#1a5cb8" /><text x="6.500" y="14.500" textAnchor="middle" fontSize="9" fontWeight="700" fill="#fff" fontFamily="Liberation Sans, sans-serif">W</text></svg> },
  { key: "excel", mark: "", node: <svg width="24" height="22" viewBox="0 0 24 22"><rect x="5" y="1" width="18" height="20" rx="1.500" fill="#21a366" /><rect x="14" y="1" width="9" height="10" fill="#33c481" /><rect x="5" y="11" width="9" height="10" fill="#185c37" /><rect x="1" y="6" width="11" height="10" rx="1" fill="#107c41" /><text x="6.500" y="14.500" textAnchor="middle" fontSize="9" fontWeight="700" fill="#fff" fontFamily="Liberation Sans, sans-serif">X</text></svg> },
  { key: "folder", mark: "w-[38px]", node: <svg width="22" height="20" viewBox="0 0 22 20"><path d="M1 3h8l2 2h10v13H1z" fill="#f5c84b" /><rect x="1" y="7" width="20" height="11" fill="#ffdf80" /><rect x="6" y="14" width="10" height="5" fill="#3e9ddb" /></svg> },
  { key: "jw", mark: "", node: <div className="w-[23px] h-[22px] bg-[#5c3a9e] text-[#ddd] text-[11px] font-['Liberation_Sans'] flex items-center justify-center">JW</div> },
  { key: "obs", mark: "w-[39px]", node: <svg width="22" height="22" viewBox="0 0 22 22" fill="none"><circle cx="11" cy="11" r="10" stroke="#ccc" strokeWidth="1.200" fill="#2b2b2b" /><circle cx="11" cy="6.500" r="2.600" stroke="#ccc" strokeWidth="1.400" /><circle cx="7" cy="14" r="2.600" stroke="#ccc" strokeWidth="1.400" /><circle cx="15" cy="14" r="2.600" stroke="#ccc" strokeWidth="1.400" /></svg> },
  { key: "sw", mark: "w-full", cls: "bg-[#4a4a4a]", node: <div className="relative w-[24px] h-[24px]"><svg width="22" height="22" viewBox="0 0 22 22" className="absolute left-[1px] top-0"><path d="M11 1l9 4v12l-9 4-9-4V5z" fill="#c1272d" /></svg><span className="absolute left-0 right-0 top-[4px] text-center font-['Liberation_Sans'] font-bold text-[11px] leading-[10px] text-white">SW</span><span className="absolute left-[-1px] right-[-1px] top-[15px] text-center font-['Liberation_Sans'] font-bold text-[8px] leading-[9px] text-[#eee]">2018</span></div> },
  { key: "media", mark: "", node: <svg width="24" height="24" viewBox="0 0 24 24"><path d="M2 8l18-5 2 4-20 3z" fill="#7cc7ef" /><rect x="2" y="9" width="20" height="13" fill="#1b7fcc" /><path d="M9 11l7 4.500L9 20z" fill="#fff" /></svg> },
  { key: "chromeP", mark: "w-[42px]", node: <div className="relative"><Chrome /><div className="absolute -right-[5px] -bottom-[3px] w-[15px] h-[15px] rounded-full bg-[#6a2ba0] text-white text-[7.500px] font-['Liberation_Sans'] flex items-center justify-center">RZ</div></div> },
];

function Taskbar() {
  return (
    <div className="h-[37px] bg-[#1c1c1c] flex items-center shrink-0 text-[#ddd]">
      <div className="w-[45px] flex justify-center">
        <svg width="15" height="15" viewBox="0 0 15 15"><path d="M0 2.100L6.800 1v6H0zM7.600.9L15 0v7H7.600zM0 8h6.800v6L0 13zM7.600 8H15v7l-7.400-1z" fill="#fff" /></svg>
      </div>
      <div className="w-[322px] h-full bg-[#f0f0f0] flex items-center pl-[11px] border-t border-[#ccc]">
        <Search size={16} strokeWidth={1.400} color="#333" className="-scale-x-100" />
        <span className="ml-[11px] text-[13px] text-[#555]">Type here to search</span>
      </div>
      <div className="w-[45px] flex justify-center">
        <div className="w-[14px] h-[14px] rounded-full border-[2px] border-[#e5e5e5]" />
      </div>
      {TASK_ICONS.map((t) => (
        <div key={t.key} className={`w-[46px] h-full flex flex-col items-center justify-center relative shrink-0 ${t.cls ?? ""}`}>
          {t.node}
          {t.mark && <div className={`absolute bottom-0 left-0 h-[1.500px] bg-[#d8cfa0] ${t.mark}`} />}
        </div>
      ))}
      <svg width="22" height="14" viewBox="0 0 22 14" className="ml-[31px]"><path d="M5 13a4 4 0 0 1-1-8 6 6 0 0 1 11-2 5 5 0 0 1 2 10z" fill="#a5d4ee" /></svg>
      <span className="ml-[10px] text-[13px] whitespace-nowrap">31°C</span>
      <ChevronUp size={16} strokeWidth={1.500} className="ml-[13px]" />
      <svg width="13" height="16" viewBox="0 0 13 16" fill="none" stroke="#ddd" className="ml-[9px]"><rect x="1" y="4" width="8" height="8" rx="1" /><path d="M9 7l3-2v6l-3-2M3 1h4M3 15h4" /></svg>
      <Mic size={16} strokeWidth={1.500} fill="#ddd" className="ml-[6px]" />
      <svg width="15" height="10" viewBox="0 0 15 10" fill="none" className="ml-[7px]"><rect x=".5" y=".5" width="12" height="9" stroke="#ddd" /><rect x="2" y="2" width="4" height="6" fill="#ddd" /><path d="M14 3v4" stroke="#ddd" /></svg>
      <svg width="16" height="14" viewBox="0 0 16 14" fill="none" stroke="#ddd" className="ml-[8px]"><path d="M1 5h2l4-3v10L3 9H1zM10 4q2 3 0 6M12.500 2.500q3 4.500 0 9" /></svg>
      <span className="ml-[9px] text-[11px]">ENG</span>
      <div className="ml-[17px] text-center text-[11px] leading-[17px] whitespace-pre">{"10:42 am\n22/11/2021"}</div>
      <MessageSquare size={17} strokeWidth={1.200} className="ml-auto mr-[22px]" />
    </div>
  );
}

export default function App() {
  return (
    <div className="w-[1280px] h-[720px] overflow-hidden flex flex-col bg-white font-['Noto_Sans',sans-serif]">
      <TitleBar />
      <Ribbon />
      <TabRow />
      <div className="h-[519px] flex relative shrink-0">
        <LeftStrip />
        <FeatureTree />
        <Canvas />
        <TaskPane />
      </div>
      <BottomTabs />
      <StatusBar />
      <Taskbar />
    </div>
  );
}
